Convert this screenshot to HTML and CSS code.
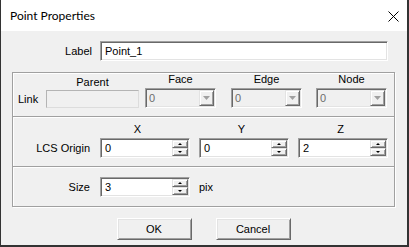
FILE: index.html
```html
<!DOCTYPE html>
<html>

<head>
	<title>Point Properties</title>
	<link rel="stylesheet" href="styles.css">
</head>

<body>
	<div class="dialog">
		<div class="titlebar">
			<span class="title">Point Properties</span>
			<svg class="close" width="11" height="11" viewBox="0 0 11 11">
				<path d="M0.5 0.5 L10.5 10.5 M10.5 0.5 L0.5 10.5" stroke="#000" stroke-width="1" fill="none" />
			</svg>
		</div>

		<div class="content">
			<div class="row label-row">
				<span class="field-label">Label</span>
				<div class="edit label-edit">Point_1</div>
			</div>

			<div class="groups">
				<!-- link -->
				<div class="group link-group row">
					<span class="link-name">Link</span>
					<div class="col parent-col">
						<span class="col-head">Parent</span>
						<div class="edit disabled"></div>
					</div>
					<div class="col combo-col face-col">
						<span class="col-head">Face</span>
						<div class="combo">
							<span class="combo-text">0</span>
							<span class="drop"><svg width="7" height="4" viewBox="0 0 7 4"><polygon points="0,0 7,0 3.5,4" fill="#a0a0a0" /></svg></span>
						</div>
					</div>
					<div class="col combo-col">
						<span class="col-head">Edge</span>
						<div class="combo">
							<span class="combo-text">0</span>
							<span class="drop"><svg width="7" height="4" viewBox="0 0 7 4"><polygon points="0,0 7,0 3.5,4" fill="#a0a0a0" /></svg></span>
						</div>
					</div>
					<div class="col combo-col node-col">
						<span class="col-head">Node</span>
						<div class="combo">
							<span class="combo-text">0</span>
							<span class="drop"><svg width="7" height="4" viewBox="0 0 7 4"><polygon points="0,0 7,0 3.5,4" fill="#a0a0a0" /></svg></span>
						</div>
					</div>
				</div>

				<!-- lcs origin -->
				<div class="group lcs-group row">
					<span class="row-label">LCS Origin</span>
					<div class="col spin-col x-col">
						<span class="col-head">X</span>
						<div class="spin">
							<span class="spin-text">0</span>
							<span class="spin-btns"><span class="spin-btn up"></span><span class="spin-btn down"></span></span>
						</div>
					</div>
					<div class="col spin-col">
						<span class="col-head">Y</span>
						<div class="spin">
							<span class="spin-text">0</span>
							<span class="spin-btns"><span class="spin-btn up"></span><span class="spin-btn down"></span></span>
						</div>
					</div>
					<div class="col spin-col">
						<span class="col-head">Z</span>
						<div class="spin">
							<span class="spin-text">2</span>
							<span class="spin-btns"><span class="spin-btn up"></span><span class="spin-btn down"></span></span>
						</div>
					</div>
				</div>

				<!-- size -->
				<div class="group size-group row">
					<span class="row-label">Size</span>
					<div class="spin size-spin">
						<span class="spin-text">3</span>
						<span class="spin-btns"><span class="spin-btn up"></span><span class="spin-btn down"></span></span>
					</div>
					<span class="unit">pix</span>
				</div>
			</div>

			<div class="buttons">
				<button class="btn">OK</button>
				<button class="btn">Cancel</button>
			</div>
		</div>
	</div>
</body>

</html>
```

FILE: styles.css
```css
* {
	box-sizing: border-box;
}

body {
	margin: 0;
	background-color: #fff;
	font-family: "Liberation Sans", Arial, sans-serif;
	font-size: 11px;
	color: #000;
}

.dialog {
	width: 409px;
	height: 247px;
	background-color: #f0f0f0;
	border-left: 1px solid #333;
	border-right: 2px solid #333;
	border-bottom: 2px solid #333;
}

.titlebar {
	height: 31px;
	background-color: #fff;
	display: flex;
	align-items: center;
	justify-content: space-between;
	padding: 0 8px 0 9px;
}

.title {
	font-family: Lato, "Noto Sans", sans-serif;
	font-size: 12px;
	line-height: 14px;
}

.close {
	margin-top: 2px;
}

.content {
	padding: 10px 12px 0 11px;
}

.row {
	display: flex;
	align-items: flex-end;
}

.col {
	display: flex;
	flex-direction: column;
}

.col-head {
	text-align: center;
	line-height: 13px;
	margin-bottom: 2px;
}

/* sunken 3d edit */
.edit,
.spin,
.combo {
	border: 1px solid;
	border-color: #a0a0a0 #fff #fff #a0a0a0;
	box-shadow: inset 1px 1px #696969, inset -1px -1px #e3e3e3;
}

.field-label {
	width: 80px;
	margin-right: 8px;
	text-align: right;
	line-height: 20px;
}

.edit {
	height: 20px;
	background-color: #fff;
	padding-left: 4px;
	line-height: 18px;
}

.label-edit {
	width: 288px;
}

.edit.disabled {
	height: 18px;
	background-color: #f0f0f0;
	border-color: #b4b4b4 #dcdcdc #dcdcdc #b4b4b4;
	box-shadow: none;
}

.groups {
	margin-top: 11px;
	width: 383px;
	border: 1px solid #a0a0a0;
	box-shadow: inset 1px 1px #fff, 1px 1px #fff;
}

.group+.group {
	border-top: 1px solid #a0a0a0;
	box-shadow: inset 0 1px #fff;
}

.link-group {
	padding: 0 0 8px 5px;
}

.link-name {
	width: 28px;
	line-height: 18px;
}

.parent-col {
	width: 93px;
}

.parent-col .col-head {
	margin-bottom: 1px;
}

.combo-col {
	width: 71px;
	margin-left: 15px;
}

.face-col {
	margin-left: 6px;
}

.node-col {
	margin-left: 14px;
}

.combo {
	display: flex;
	height: 20px;
	background-color: #f0f0f0;
	color: #6d6d6d;
}

.combo-text {
	flex: 1;
	padding-left: 3px;
	line-height: 18px;
}

/* raised 3d button face */
.drop,
.spin-btn,
.btn {
	border: 1px solid;
	border-color: #e3e3e3 #696969 #696969 #e3e3e3;
	box-shadow: inset 1px 1px #fff, inset -1px -1px #a0a0a0;
	background-color: #f0f0f0;
}

.drop {
	width: 15px;
	margin: 1px 1px 1px 0;
	display: flex;
	align-items: center;
	justify-content: center;
}

.lcs-group {
	padding: 6px 0 8px 0;
}

.size-group {
	padding: 10px 0 9px 0;
}

.row-label {
	width: 77px;
	margin-right: 10px;
	text-align: right;
	line-height: 20px;
}

.spin-col {
	width: 90px;
	margin-left: 9px;
}

.spin-col .col-head {
	padding-right: 5px;
}

.x-col {
	margin-left: 0;
}

.x-col .col-head {
	padding-right: 15px;
}

.spin {
	display: flex;
	height: 20px;
	background-color: #fff;
}

.size-spin {
	width: 90px;
}

.spin-text {
	flex: 1;
	padding-left: 4px;
	line-height: 18px;
}

.spin-btns {
	width: 16px;
	margin: 1px 1px 1px 0;
	display: flex;
	flex-direction: column;
}

.spin-btn {
	flex: 1;
	display: flex;
	align-items: center;
	justify-content: center;
}

.spin-btn::before {
	content: "";
	border-left: 2px solid transparent;
	border-right: 2px solid transparent;
}

.up::before {
	border-bottom: 2px solid #000;
}

.down::before {
	border-top: 2px solid #000;
}

.unit {
	margin-left: 9px;
	line-height: 20px;
}

.buttons {
	display: flex;
	justify-content: center;
	gap: 24px;
	margin-top: 11px;
}

.btn {
	width: 75px;
	height: 22px;
	padding: 0;
	font-family: "Liberation Sans", Arial, sans-serif;
	font-size: 11px;
	color: #000;
	border-color: #fff #696969 #696969 #fff;
	box-shadow: inset 1px 1px #e3e3e3, inset -1px -1px #a0a0a0;
}
```
